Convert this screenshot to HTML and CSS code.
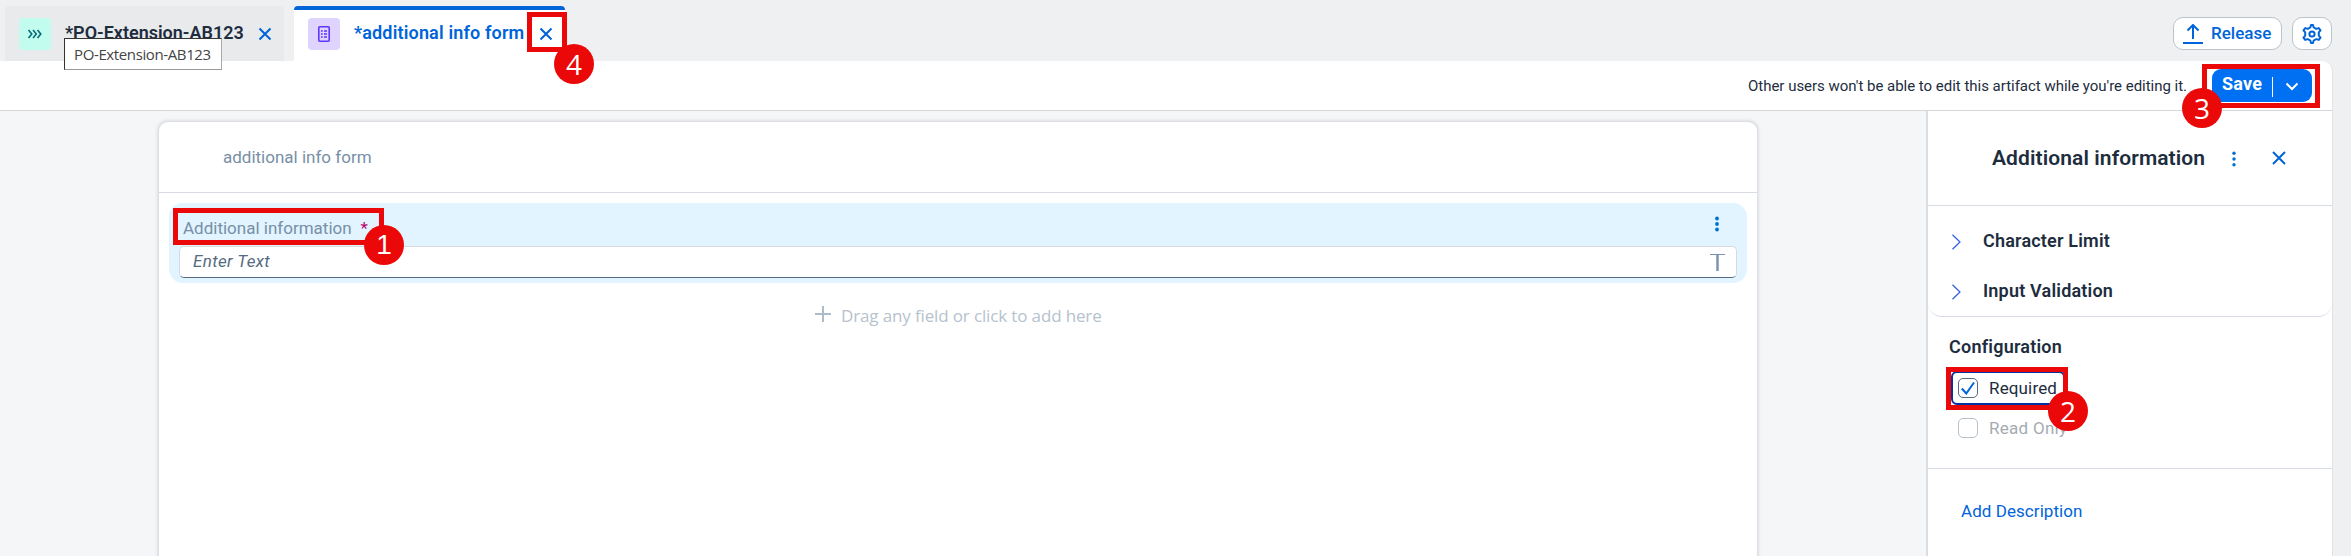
FILE: index.html
```html
<!DOCTYPE html>
<html lang="en">
<head>
<meta charset="utf-8">
<title>additional info form</title>
<link rel="stylesheet" href="styles.css">
</head>
<body>
<header class="topbar">
  <div class="tab">
    <span class="tab-icon process"><svg width="16" height="12" viewBox="0 0 16 12"><path d="M1.500 2l3.300 4-3.300 4M6 2l3.300 4L6 10M10.500 2l3.300 4-3.300 4"/></svg></span>
    <span class="tab-name">*PO-Extension-AB123</span>
    <svg class="x" width="14" height="14" viewBox="0 0 14 14"><path d="M1.500 1.500l11 11M12.500 1.500l-11 11"/></svg>
    <div class="tooltip">PO-Extension-AB123</div>
  </div>
  <div class="tab active">
    <span class="tab-icon form"><svg width="12" height="16" viewBox="0 0 12 16"><rect x=".8" y=".8" width="10.400" height="14.400" rx="1"/><path d="M3 5h1.700M6 5h3M3 8h1.700M6 8h3M3 11h1.700M6 11h3"/></svg></span>
    <span class="tab-name">*additional info form</span>
    <svg class="x" width="14" height="14" viewBox="0 0 14 14"><path d="M1.500 1.500l11 11M12.500 1.500l-11 11"/></svg>
  </div>
  <div class="top-actions">
    <button class="btn release"><svg width="20" height="20" viewBox="0 0 20 20"><path d="M0 19h20M10 15V1.500M4.500 6.500L10 1l5.500 5.500"/></svg><span>Release</span></button>
    <button class="btn gear"><svg width="20" height="20" viewBox="0 0 20 20"><path d="M8.300 3.500L9 1h2l.7 2.500 2.500 1.400 2.600-.8 1.700 2.200-1.700 2v3.400l1.700 2-1.700 2.200-2.600-.8-2.500 1.400L11 19H9l-.7-2.500-2.500-1.400-2.600.8-1.700-2.200 1.700-2V8.300l-1.700-2 1.700-2.200 2.600.8z"/><circle cx="10" cy="10" r="2.600"/></svg></button>
  </div>
</header>
<div class="shell">
  <div class="toolbar">
    <span class="notice">Other users won't be able to edit this artifact while you're editing it.</span>
    <button class="save"><span>Save</span><i></i><svg width="14" height="9" viewBox="0 0 14 9"><path d="M1.500 1.500L7 7l5.500-5.500"/></svg></button>
  </div>
  <div class="work">
    <main class="canvas">
      <section class="card">
        <h1 class="form-name">additional info form</h1>
        <div class="field">
          <div class="field-label"><span>Additional information</span><b>*</b>
            <svg class="dots" width="4" height="16" viewBox="0 0 4 16"><circle cx="2" cy="2.500" r="1.900"/><circle cx="2" cy="8" r="1.900"/><circle cx="2" cy="13.500" r="1.900"/></svg></div>
          <div class="input"><em>Enter Text</em><svg width="15" height="17" viewBox="0 0 15 17"><path d="M0 .5h15"/><path class="stem" d="M7.500 1v16"/></svg></div>
        </div>
        <div class="drop"><svg width="16" height="16" viewBox="0 0 16 16"><path d="M8 0v16M0 8h16"/></svg><span>Drag any field or click to add here</span></div>
      </section>
    </main>
    <aside class="panel">
      <div class="panel-head"><h2>Additional information</h2>
        <svg class="dots" width="4" height="16" viewBox="0 0 4 16"><circle cx="2" cy="2.300" r="1.700"/><circle cx="2" cy="8" r="1.700"/><circle cx="2" cy="13.700" r="1.700"/></svg>
        <svg class="x" width="16" height="16" viewBox="0 0 16 16"><path d="M2 2l12 12M14 2L2 14"/></svg></div>
      <div class="sections">
        <div class="section"><svg width="9" height="16" viewBox="0 0 9 16"><path d="M.5 .7L8 8 .5 15.300"/></svg><span>Character Limit</span></div>
        <div class="section"><svg width="9" height="16" viewBox="0 0 9 16"><path d="M.5 .7L8 8 .5 15.300"/></svg><span>Input Validation</span></div>
      </div>
      <div class="config">
        <h3>Configuration</h3>
        <div class="check focus"><span class="box"><svg width="14" height="14" viewBox="0 0 14 14"><path d="M.8 7.500l4.500 5L13 1.500"/></svg></span><span>Required</span></div>
        <div class="check off"><span class="box"></span><span>Read Only</span></div>
      </div>
      <div class="desc"><a>Add Description</a></div>
    </aside>
  </div>
</div>
<div class="mark m1"><b>1</b></div>
<div class="mark m2"><b>2</b></div>
<div class="mark m3"><b>3</b></div>
<div class="mark m4"><b>4</b></div>
</body>
</html>
```
FILE: styles.css
```css
* { box-sizing: border-box; }
body { margin: 0; height: 556px; overflow: hidden; position: relative; background: #eff0f2; font: 17px/20px Roboto, sans-serif; color: #1d2d3e; }
svg { display: block; flex: none; fill: none; stroke: #0064d9; stroke-width: 2; }
h1, h2, h3 { margin: 0; font-weight: 400; }
span, h2, em, a { white-space: nowrap; }
button { font: inherit; padding: 0; }

.topbar { height: 61px; padding: 6px 19px 0 5px; display: flex; align-items: flex-start; }
.tab { position: relative; width: 279px; height: 55px; padding: 12px 13px 0 14px; display: flex; background: #e9eaec; border-radius: 4px 4px 0 0; }
.tab.active { width: 271px; margin-left: 10px; padding-top: 8px; background: #fff; border-top: 4px solid #0064d9; color: #0064d9; }
.tab-icon { width: 32px; height: 32px; flex: none; border-radius: 4px; display: grid; place-items: center; }
.process { background: #c2fcee; }
.process svg { stroke: #046c7a; stroke-width: 1.6; }
.form { background: #dfd3ff; }
.form svg { stroke: #5d36ff; stroke-width: 1.6; }
.tab-name { flex: none; margin: 4px 0 0 14px; width: 179px; font-size: 18px; line-height: 21px; font-weight: 600; }
.active .tab-name { width: 171px; letter-spacing: .16px; }
.tab .x { margin: 9px 0 0 14px; }
.tooltip { position: absolute; z-index: 2; left: 59px; top: 32px; width: 158px; height: 32px; padding: 5px 0 0 9px; background: #fff; border: 1px solid #333; border-right-color: #aaa; border-bottom-color: #999; font: 15px/20px "Open Sans", sans-serif; letter-spacing: -.38px; color: #444; }
.top-actions { margin-left: auto; padding-top: 11px; display: flex; gap: 10px; }
.btn { height: 33px; background: #fff; border: 1px solid #bcc3ca; border-radius: 10px; display: flex; color: #0064d9; font-weight: 500; }
.release { width: 109px; padding: 6px 0 0 9px; gap: 8px; }
.release span { line-height: 20px; margin-top: -1px; }
.gear { width: 40px; padding: 6px 0 0 9px; }
.gear svg { stroke-linejoin: round; }

.shell { width: 2333px; height: 495px; display: flex; flex-direction: column; background: #fff; border-right: 1px solid #e0e2e6; border-radius: 0 10px 0 0; }
.toolbar { height: 50px; flex: none; padding: 8px 20px 0 0; display: flex; justify-content: flex-end; border-bottom: 1px solid #d5d7da; }
.notice { width: 439px; margin-right: 25px; line-height: 34px; font-size: 15px; letter-spacing: -.02px; }
.save { width: 100px; height: 33px; padding-left: 10px; display: flex; background: #0070f2; border: 0; border-radius: 9px; color: #fff; font-size: 18px; font-weight: 700; }
.save span { width: 50px; line-height: 30px; text-align: left; letter-spacing: .2px; }
.save i { width: 1px; height: 20px; margin-top: 8px; background: #fff; }
.save svg { stroke: #fff; margin: 13px 0 0 12px; }

.work { flex: 1; display: flex; min-height: 0; }
.canvas { width: 1926px; padding: 11px 0 0 159px; background: #f5f6f7; overflow: hidden; }
.card { width: 1598px; height: 460px; background: #fff; border-radius: 9px 9px 0 0; box-shadow: 0 0 0 1px #dcdfe5, 0 0 3px 2px #dcdfe4; }
.form-name { height: 71px; padding: 25px 0 0 64px; font-size: 17px; line-height: 20px; border-bottom: 1px solid #d9dce3; color: #788fa6; }
.field { width: 1578px; height: 80px; margin: 10px 0 0 10px; padding: 0 10px; background: #e1f4ff; border-radius: 14px; }
.field-label { height: 43px; padding: 15px 18px 0 4px; display: flex; color: #788fa6; }
.field-label b { margin-left: 9px; font-weight: 400; line-height: 20px; color: #ba066c; }
.dots { fill: #0070d2; stroke: none; }
.field-label .dots { margin: -2px 0 0 auto; }
.input { height: 32px; padding: 4px 11px 0 13px; display: flex; justify-content: space-between; background: #fff; border: 1px solid #d5dae0; border-bottom-color: #556b82; border-radius: 5px; color: #556b82; letter-spacing: .37px; }
.input svg { margin-top: 3px; stroke: #7b95b0; stroke-width: 1; }
.input .stem { stroke-width: 2.500; }
.drop { margin-top: 23px; padding-left: 656px; display: flex; gap: 10px; font: 17px/20px "Open Sans", sans-serif; letter-spacing: -.14px; color: #b6c2ce; }
.drop svg { stroke: #acbccb; stroke-width: 2; }

.panel { width: 406px; border-left: 2px solid #dadde3; display: flex; flex-direction: column; background: #fff; }
.panel-head { height: 95px; padding: 35px 44px 0 64px; display: flex; border-bottom: 1px solid #d9dce3; }
h2 { width: 214px; font-size: 21px; line-height: 24px; font-weight: 600; letter-spacing: .1px; }
.panel-head .dots { margin: 5px 0 0 26px; }
.panel-head .x { margin: 4px 0 0 35px; }
.sections { height: 111px; padding: 11px 0 0 24px; border-bottom: 1px solid #d9dce3; border-radius: 0 0 14px 14px; }
.section { height: 50px; display: flex; align-items: center; gap: 22px; font-size: 18px; font-weight: 600; padding-bottom: 1px; letter-spacing: .19px; }
.section span { line-height: 21px; margin-top: -2px; }
.section svg { stroke: #2d5be3; stroke-width: 1.2; }
.config { height: 152px; padding: 19px 0 0 21px; border-bottom: 1px solid #d9dce3; }
h3 { font-size: 18px; line-height: 21px; font-weight: 600; letter-spacing: .22px; }
.check { display: flex; height: 34px; width: 114px; gap: 11px; padding: 5px 0 0 7px; margin: 14px 0 0 2px; letter-spacing: .15px; }
.check.focus { border: 2px solid #0032a5; border-radius: 6px; padding: 5px 0 0 5px; }
.check.off { margin-top: 8px; color: #a5abb2; letter-spacing: .28px; }
.box { flex: none; width: 20px; height: 20px; border: 1px solid #556b82; border-radius: 5px; display: grid; place-items: center; }
.off .box { border-color: #b8c1ca; }
.desc { padding: 32px 0 0 33px; color: #0064d9; letter-spacing: .06px; }

.mark { position: absolute; z-index: 5; border: 5px solid #eb0808; }
.mark b { position: absolute; width: 40px; height: 40px; border-radius: 50%; background: #eb0808; color: #fff; font: 28px/40px "Open Sans", sans-serif; text-align: center; }
.m1 { left: 173px; top: 208px; width: 211px; height: 37px; }
.m1 b { left: 186px; top: 12px; font-family: "Liberation Sans", sans-serif; }
.m2 { left: 1946px; top: 367px; width: 122px; height: 43px; }
.m2 b { left: 97px; top: 19px; }
.m3 { left: 2202px; top: 64px; width: 118px; height: 44px; }
.m3 b { left: -25px; top: 19px; }
.m4 { left: 527px; top: 12px; width: 40px; height: 40px; }
.m4 b { left: 22px; top: 27px; }
```
